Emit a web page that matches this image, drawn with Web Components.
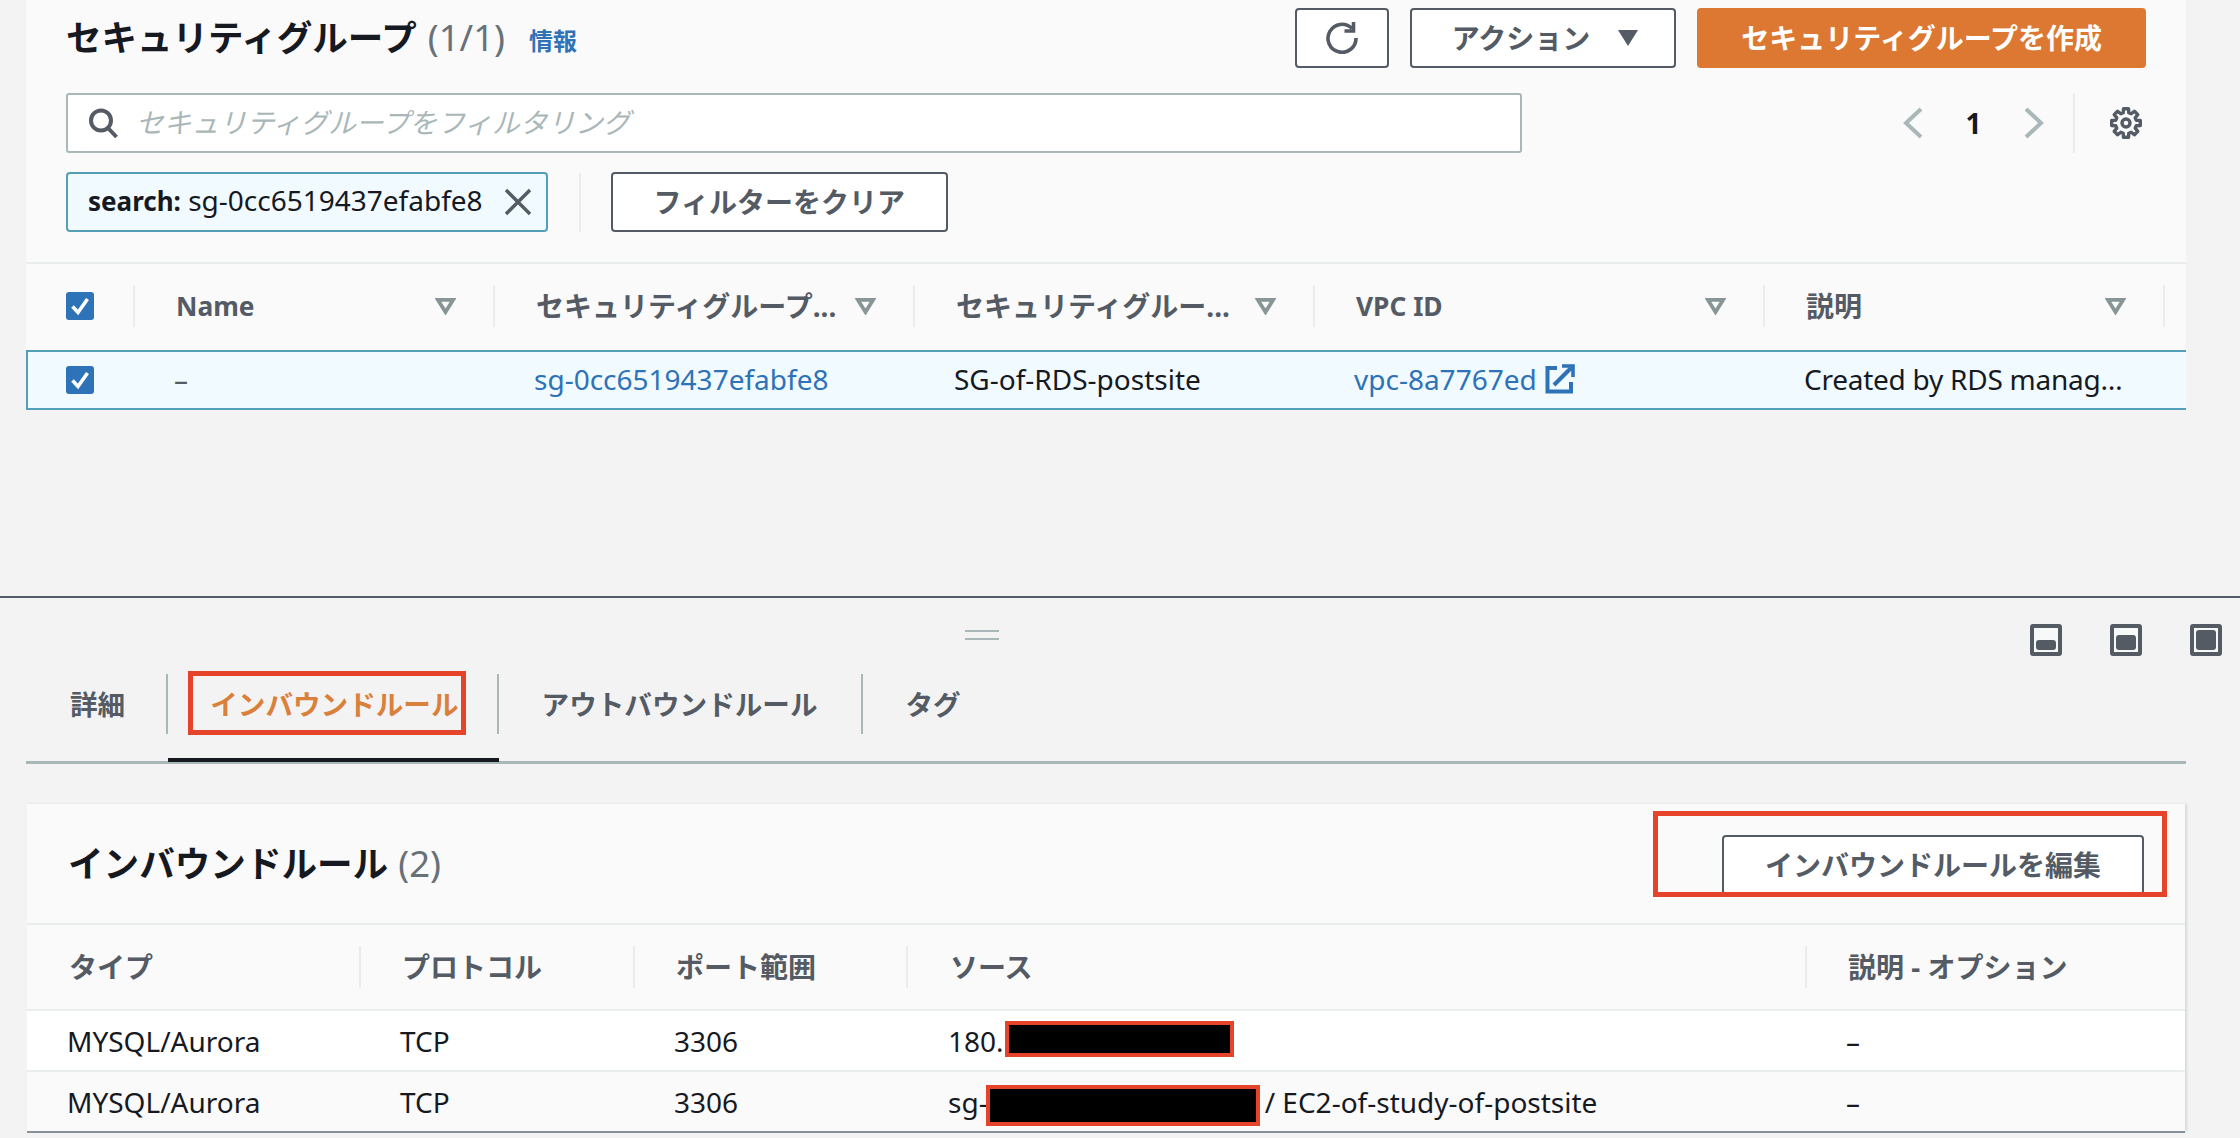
<!DOCTYPE html>
<html lang="ja">
<head>
<meta charset="utf-8">
<title>セキュリティグループ</title>
<style>
  html, body { margin: 0; padding: 0; background: #f3f3f3; }
  body { font-family: "Noto Sans", "Noto Sans CJK JP", sans-serif; color: #16191f; }
</style>
</head>
<body>
<sg-console></sg-console>

<script>
const FONT = `"Noto Sans", "Noto Sans CJK JP", sans-serif`;

// Iconos
const icons = {
  search: `<svg width="32" height="32" viewBox="0 0 32 32" fill="none" stroke="#545b64" stroke-width="4"><circle cx="14" cy="13.5" r="10"/><path d="M21 21l8.5 9"/></svg>`,
  close: `<svg width="28" height="28" viewBox="0 0 28 28" fill="none" stroke="#545b64" stroke-width="3.4"><path d="M2 2l24 24M26 2L2 26"/></svg>`,
  refresh: `<svg width="34" height="32" viewBox="0 0 34 32" fill="none" stroke="#545b64" stroke-width="3.6"><path d="M27 6.5A14 14 0 1 0 31 16"/><path d="M28.5 0v9h-9"/></svg>`,
  caret: `<svg width="20" height="16" viewBox="0 0 20 16"><path d="M0 0h20L10 16z" fill="#545b64"/></svg>`,
  left: `<svg width="20" height="32" viewBox="0 0 20 32" fill="none" stroke="#aab7b8" stroke-width="4"><path d="M18 2L3 16l15 14"/></svg>`,
  right: `<svg width="20" height="32" viewBox="0 0 20 32" fill="none" stroke="#aab7b8" stroke-width="4"><path d="M2 2l15 14L2 30"/></svg>`,
  filter: `<svg width="21" height="17" viewBox="0 0 21 17" fill="none" stroke="#879596" stroke-width="3.8"><path d="M2.9 1.9h15.2L10.5 14z"/></svg>`,
  external: `<svg width="30" height="30" viewBox="0 0 30 30" fill="none" stroke="#2e72b8" stroke-width="4"><path d="M12 4H2.5v23.5H26V18"/><path d="M9 21L26 4"/><path d="M17 2h11v11" stroke-width="3.6"/></svg>`,
  check: `<svg width="28" height="28" viewBox="0 0 28 28"><rect width="28" height="28" rx="3" fill="#2e72b8"/><path d="M6.5 14.5l5.5 6L21.5 7" fill="none" stroke="#fff" stroke-width="3.6"/></svg>`,
};

// Engranaje de 8 dientes
const gearPoints = () => {
  let pts = [];
  for (let i = 0; i < 8; i++) {
    const a = i * Math.PI / 4 - Math.PI / 2;
    [[-0.27, 10.6], [-0.17, 14.5], [0.17, 14.5], [0.27, 10.6]].forEach(([da, r]) => {
      pts.push(`${(16 + r * Math.cos(a + da)).toFixed(1)},${(16 + r * Math.sin(a + da)).toFixed(1)}`);
    });
  }
  return pts.join(" ");
};
icons.gear = `<svg width="32" height="32" viewBox="0 0 32 32" fill="none" stroke="#545b64" stroke-width="3.4" stroke-linejoin="round"><polygon points="${gearPoints()}"/><circle cx="16" cy="16" r="4"/></svg>`;

const define = (name, css, html) => {
  customElements.define(name, class extends HTMLElement {
    constructor() {
      super();
      this.attachShadow({ mode: "open" });
      this.shadowRoot.innerHTML = `<style>${css}</style>${html}`;
    }
  });
};

define("aws-button", `
  :host {
    display: inline-flex; align-items: center; justify-content: center; gap: 25px;
    box-sizing: border-box; height: 60px; padding: 0 var(--pad, 41px);
    background: #fff; border: 2px solid #545b64; border-radius: 4px;
    color: #545b64; font: 700 28px/1 ${FONT}; white-space: nowrap;
  }
  :host([primary]) { background: #dc7832; border-color: #dc7832; color: #fff; }
`, `<slot></slot>`);

define("filter-chip", `
  :host {
    display: flex; align-items: center; gap: 21px; box-sizing: border-box;
    height: 60px; padding: 0 14px 4px 20px; background: #f1faff;
    border: 2px solid #539fb8; border-radius: 4px;
    font: 400 28px/1 ${FONT}; color: #16191f; white-space: nowrap;
  }
  b { font-weight: 700; font-size: 26px; }
  svg { display: block; margin-top: 4px; }
`, `<span><b>search:</b> <slot></slot></span>${icons.close}`);

define("search-box", `
  :host {
    display: flex; align-items: center; gap: 17px; box-sizing: border-box;
    width: 1456px; height: 60px; padding: 0 0 0 19px; background: #fff;
    border: 2px solid #aab7b8; border-radius: 3px;
    font: italic 400 27.7px/1 ${FONT}; color: #aab7b8;
  }
`, `${icons.search}<slot></slot>`);

define("pager-bar", `
  :host { display: flex; align-items: center; height: 60px; }
  .n { width: 101px; text-align: center; font: 700 28px/1 ${FONT}; color: #16191f; }
  .sep { width: 2px; height: 60px; background: #eaeded; margin: 0 35px 0 29px; }
  svg { display: block; }
`, `${icons.left}<span class="n">1</span>${icons.right}<span class="sep"></span>${icons.gear}`);

// Tabla de grupos de seguridad
const sgColumns = ["", "Name", "セキュリティグループ...", "セキュリティグルー...", "VPC ID", "説明"];

define("sg-table", `
  :host { display: block; }
  .row { display: grid; grid-template-columns: 109px 360px 420px 400px 450px 400px 21px; }
  .head { height: 86px; border-top: 2px solid #eaeded; }
  .th { display: flex; align-items: center; padding: 0 0 2px 41px; color: #545b64; font: 700 28px/1 ${FONT}; white-space: nowrap; }
  .th span { flex: 1; }
  .th span.lat { font-size: 26.3px; }
  .th i { width: 2px; height: 42px; background: #eaeded; margin-left: 37px; }
  .th svg { display: block; }
  .th.first { padding-left: 40px; }
  .th.first span { flex: 1; display: block; height: 28px; }
  .body { box-sizing: border-box; height: 60px; background: #f1faff; border: solid #539fb8; border-width: 2px 0 2px 2px; margin-top: 0; }
  .td { display: flex; align-items: center; padding: 0 0 2px 37px; font: 400 28px/1 ${FONT}; white-space: nowrap; gap: 8px; }
  .td.first { padding: 0 0 0 38px; }
  .td svg { display: block; }
  .td.clip { letter-spacing: -0.25px; }
  a { color: #2e72b8; text-decoration: none; }
  .dash { color: #545b64; }
`, `
  <div class="row head">
    <div class="th first"><span>${icons.check}</span><i></i></div>
    ${sgColumns.slice(1).map(c => `<div class="th"><span class="${/^[A-Z]/.test(c) ? "lat" : ""}">${c}</span>${icons.filter}<i></i></div>`).join("")}
  </div>
  <div class="row body">
    <div class="td first">${icons.check}</div>
    <div class="td dash">–</div>
    <div class="td"><a>sg-0cc6519437efabfe8</a></div>
    <div class="td">SG-of-RDS-postsite</div>
    <div class="td"><a>vpc-8a7767ed</a>${icons.external}</div>
    <div class="td clip">Created by RDS manag…</div>
  </div>
`);

define("top-panel", `
  :host { display: block; box-sizing: border-box; height: 410px; margin-left: 26px; width: 2160px; background: #fafafa; padding-top: 8px; }
  .title, .filter, .tokens { display: flex; align-items: center; padding: 0 40px; }
  .title { height: 60px; }
  h1 { margin: 0; font: 700 35.5px/1 ${FONT}; color: #16191f; white-space: nowrap; position: relative; top: -1px; }
  h1 span { font-weight: 400; font-size: 36.5px; color: #687078; margin-left: 11px; }
  .info { margin: 5px 0 0 24px; font: 700 24px/1 ${FONT}; color: #2e72b8; }
  .actions { margin-left: auto; display: flex; gap: 21px; }
  .filter { margin-top: 25px; height: 60px; }
  pager-bar { margin-left: auto; margin-right: 4px; }
  .tokens { margin-top: 19px; height: 60px; }
  .vsep { width: 2px; height: 59px; background: #eaeded; margin: 0 30px 0 31px; }
  sg-table { margin-top: 30px; }
  svg { display: block; }
`, `
  <div class="title">
    <h1>セキュリティグループ<span>(1/1)</span></h1>
    <a class="info">情報</a>
    <div class="actions">
      <aws-button style="--pad:28px">${icons.refresh}</aws-button>
      <aws-button style="padding:0 36px 0 40px;gap:28px">アクション${icons.caret}</aws-button>
      <aws-button primary style="--pad:42px">セキュリティグループを作成</aws-button>
    </div>
  </div>
  <div class="filter">
    <search-box>セキュリティグループをフィルタリング</search-box>
    <pager-bar></pager-bar>
  </div>
  <div class="tokens">
    <filter-chip>sg-0cc6519437efabfe8</filter-chip>
    <span class="vsep"></span>
    <aws-button>フィルターをクリア</aws-button>
  </div>
  <sg-table></sg-table>
`);

define("split-icon", `
  :host { display: block; position: relative; box-sizing: border-box; width: 32px; height: 32px; border: 4px solid #545b64; border-radius: 3px; background: #f7f8f8; padding: 2px; }
  div { position: absolute; left: 2px; right: 2px; bottom: 2px; background: #545b64; border-radius: 3px; height: var(--h); }
`, `<div></div>`);

define("tab-item", `
  :host { display: flex; border-bottom: 4px solid transparent; padding-bottom: 24px; margin-bottom: -1px; }
  :host([active]) { border-bottom-color: #16191f; }
  div { height: 60px; box-sizing: border-box; padding: 0 var(--pr, 40px) 0 var(--pl, 43px); border-right: 2px solid #aab7b8; font: 700 27.6px/60px ${FONT}; color: #545b64; white-space: nowrap; }
  :host([last]) div { border-right: 0; }
  :host([active]) div { color: #d9803a; }
`, `<div><slot></slot></div>`);

define("tab-bar", `
  :host { display: flex; margin: 0 54px 0 26px; border-bottom: 3px solid #aab7b8; position: relative; }
  .mark { position: absolute; left: 162px; top: -3px; width: 278px; height: 64px; box-sizing: border-box; border: 5px solid #e5442b; }
`, `<slot></slot><div class="mark"></div>`);

// Tabla de reglas de entrada
define("rules-table", `
  :host { display: block; }
  .row { display: grid; grid-template-columns: 334px 274px 273px 899px 378px; }
  .head { height: 84px; }
  .th { display: flex; align-items: center; justify-content: space-between; padding-left: 41px; font: 700 28px/1 ${FONT}; color: #545b64; }
  .th:nth-child(1), .th:nth-child(4) { padding-left: 42px; }
  .th i { width: 2px; height: 42px; background: #eaeded; }
  .cells { height: 59px; border-top: 2px solid #eaeded; background: #fafafa; }
  .cells.white { background: #fff; }
  .td { display: flex; align-items: center; padding-left: 39px; font: 400 28px/1 ${FONT}; white-space: nowrap; }
  .td:nth-child(1), .td:nth-child(4) { padding-left: 40px; }
  .redact { box-sizing: border-box; display: block; background: #000; border: 4px solid #e5442b; }
  .r1 { width: 229px; height: 36px; margin-left: 1px; margin-top: -4px; }
  .r2 { width: 274px; height: 41px; margin: 8px 5px 0 -2px; }
`, `
  <div class="row head">
    <div class="th">タイプ<i></i></div>
    <div class="th">プロトコル<i></i></div>
    <div class="th">ポート範囲<i></i></div>
    <div class="th">ソース<i></i></div>
    <div class="th">説明 - オプション</div>
  </div>
  <div class="row cells white">
    <div class="td">MYSQL/Aurora</div><div class="td">TCP</div><div class="td">3306</div>
    <div class="td">180.<span class="redact r1"></span></div>
    <div class="td">–</div>
  </div>
  <div class="row cells">
    <div class="td">MYSQL/Aurora</div><div class="td">TCP</div><div class="td">3306</div>
    <div class="td">sg-<span class="redact r2"></span>/ EC2-of-study-of-postsite</div>
    <div class="td">–</div>
  </div>
`);

define("rules-card", `
  :host { display: block; margin: 40px 0 0 27px; width: 2158px; background: #fafafa; box-shadow: 0 2px 0 #8a9099, 2px 0 2px #d5dbdb; position: relative; }
  .top { box-sizing: border-box; height: 121px; display: flex; align-items: center; padding: 0 41px; border-bottom: 2px solid #eaeded; }
  h2 { margin: 0; font: 700 35.6px/1 ${FONT}; white-space: nowrap; color: #16191f; }
  h2 span { font-weight: 400; font-size: 36.5px; color: #687078; margin-left: 10px; }
  .wrap { margin-left: auto; position: relative; height: 58px; }
  .mark { position: absolute; right: -23px; top: -24px; width: 514px; height: 86px; box-sizing: border-box; border: 5px solid #e5442b; pointer-events: none; }
`, `
  <div class="top">
    <h2>インバウンドルール<span>(2)</span></h2>
    <div class="wrap">
      <aws-button>インバウンドルールを編集</aws-button>
      <div class="mark"></div>
    </div>
  </div>
  <rules-table></rules-table>
`);

define("detail-panel", `
  :host { display: block; }
  .tools { display: flex; align-items: center; padding: 26px 18px 0 0; margin-bottom: 18px; }
  .handle { width: 34px; height: 10px; margin: 0 auto 10px 965px; border: solid #aab7b8; border-width: 2px 0; box-sizing: border-box; }
  .icons { display: flex; gap: 48px; }
`, `
  <div class="tools">
    <div class="handle"></div>
    <div class="icons">
      <split-icon style="--h:10px"></split-icon>
      <split-icon style="--h:15px"></split-icon>
      <split-icon style="--h:20px"></split-icon>
    </div>
  </div>
  <tab-bar>
    <tab-item style="--pl:44px;--pr:41px">詳細</tab-item>
    <tab-item active style="--pl:42px;--pr:38px">インバウンドルール</tab-item>
    <tab-item style="--pr:43px">アウトバウンドルール</tab-item>
    <tab-item last>タグ</tab-item>
  </tab-bar>
  <rules-card></rules-card>
`);

define("sg-console", `
  :host { display: block; width: 2240px; height: 1138px; overflow: hidden; background: #f3f3f3; }
  .upper { box-sizing: border-box; height: 598px; border-bottom: 2px solid #545b64; }
`, `
  <div class="upper"><top-panel></top-panel></div>
  <detail-panel></detail-panel>
`);
</script>
</body>
</html>
